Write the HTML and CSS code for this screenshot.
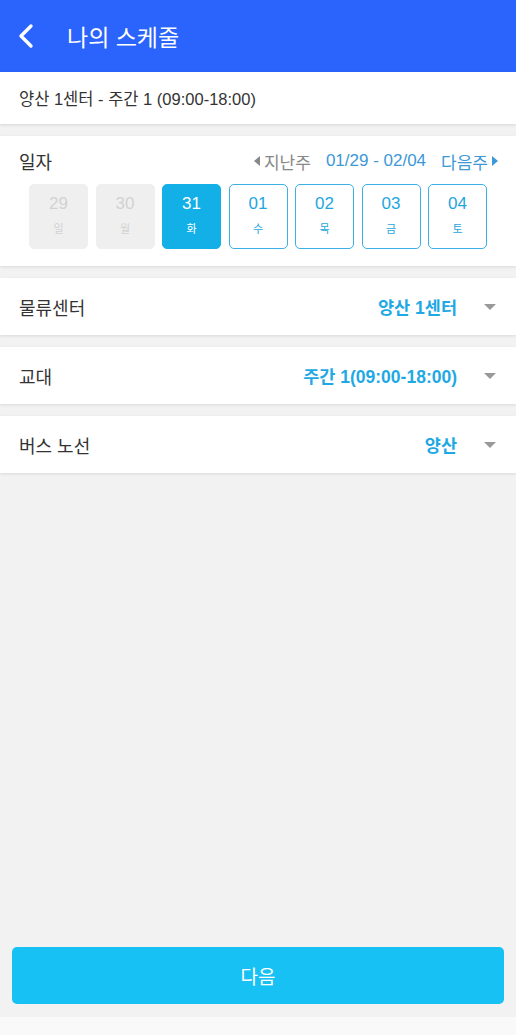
FILE: index.html
```html
<!DOCTYPE html>
<html lang="ko">
<head>
    <meta charset="UTF-8">
    <meta name="viewport" content="width=device-width, initial-scale=1.0">
    <title>나의 스케줄</title>
    <link rel="stylesheet" href="styles.css">
</head>
<body>
    <div class="page">
        <div class="header">
            <svg class="back" width="18" height="26" viewBox="0 0 18 26">
                <path d="M14 3 L4 13 L14 23" fill="none" stroke="#fff" stroke-width="3.4" stroke-linecap="round" stroke-linejoin="round"/>
            </svg>
            <h1 class="title">나의 스케줄</h1>
        </div>

        <div class="info">양산 1센터 - 주간 1 (09:00-18:00)</div>

        <div class="card date-card">
            <div class="date-top">
                <span class="label">일자</span>
                <div class="week-nav">
                    <span class="prev"><i class="tri-left"></i>지난주</span>
                    <span class="range">01/29 - 02/04</span>
                    <span class="next">다음주<i class="tri-right"></i></span>
                </div>
            </div>
            <ul class="days">
                <li class="day off"><b>29</b><small>일</small></li>
                <li class="day off"><b>30</b><small>월</small></li>
                <li class="day current"><b>31</b><small>화</small></li>
                <li class="day"><b>01</b><small>수</small></li>
                <li class="day"><b>02</b><small>목</small></li>
                <li class="day"><b>03</b><small>금</small></li>
                <li class="day"><b>04</b><small>토</small></li>
            </ul>
        </div>

        <div class="card row">
            <span class="label">물류센터</span>
            <span class="value">양산 1센터</span>
            <i class="caret"></i>
        </div>
        <div class="card row">
            <span class="label">교대</span>
            <span class="value">주간 1(09:00-18:00)</span>
            <i class="caret"></i>
        </div>
        <div class="card row">
            <span class="label">버스 노선</span>
            <span class="value">양산</span>
            <i class="caret"></i>
        </div>

        <div class="spacer"></div>

        <div class="footer">
            <button class="next-btn">다음</button>
        </div>
        <div class="bottom"></div>
    </div>
</body>
</html>
```

FILE: styles.css
```css
*{
    margin: 0;
    padding: 0;
    list-style: none;
    box-sizing: border-box;
}
body{
    font-family: "Liberation Sans", "Noto Sans CJK KR", sans-serif;
    background-color: #f2f2f2;
    color: #333;
}
.page{
    width: 516px;
    height: 1035px;
    display: flex;
    flex-direction: column;
}
.header{
    height: 72px;
    background-color: #2a64fc;
    display: flex;
    align-items: center;
    padding-left: 17px;
}
.back{
    margin-right: 32px;
}
.title{
    color: #fff;
    font-size: 23px;
    font-weight: 400;
}
.info{
    height: 52px;
    background-color: #fff;
    display: flex;
    align-items: center;
    padding-left: 19px;
    font-size: 16.5px;
    color: #333;
    box-shadow: 0 1px 3px rgba(0,0,0,0.12);
}
.card{
    background-color: #fff;
    margin-top: 12px;
    box-shadow: 0 1px 3px rgba(0,0,0,0.1);
}
.label{
    font-size: 18px;
    color: #333;
}
.date-card{
    height: 130px;
    padding: 12px 0 0 0;
}
.date-top{
    display: flex;
    justify-content: space-between;
    align-items: center;
    padding: 0 18px 0 19px;
    height: 26px;
}
.week-nav{
    display: flex;
    align-items: center;
    font-size: 17px;
}
.prev{
    color: #888;
    display: flex;
    align-items: center;
}
.range{
    color: #3d98d6;
    margin-left: 15px;
    margin-right: 15px;
}
.next{
    color: #3d98d6;
    display: flex;
    align-items: center;
}
.tri-left{
    width: 0;
    height: 0;
    border-top: 5px solid transparent;
    border-bottom: 5px solid transparent;
    border-right: 6px solid #888;
    margin-right: 4px;
}
.tri-right{
    width: 0;
    height: 0;
    border-top: 5px solid transparent;
    border-bottom: 5px solid transparent;
    border-left: 6px solid #3d98d6;
    margin-left: 4px;
}
.days{
    display: flex;
    gap: 7.5px;
    padding-left: 29px;
    margin-top: 10px;
}
.day{
    width: 59px;
    height: 65px;
    border: 1.5px solid #3ab0e5;
    border-radius: 5px;
    display: flex;
    flex-direction: column;
    align-items: center;
    padding-top: 8px;
    color: #1ea6e0;
}
.day b{
    font-weight: 400;
    font-size: 17px;
    line-height: 22px;
}
.day small{
    font-size: 11px;
    margin-top: 5px;
}
.day.off{
    background-color: #efefef;
    border-color: #efefef;
    color: #d2d2d2;
}
.day.current{
    background-color: #13afe7;
    border-color: #13afe7;
    color: #fff;
}
.row{
    height: 57px;
    display: flex;
    align-items: center;
    padding: 0 20px 0 19px;
}
.row .label{
    flex: 1;
}
.value{
    color: #1fa9e4;
    font-weight: 700;
    font-size: 17.5px;
}
.caret{
    width: 0;
    height: 0;
    border-left: 6px solid transparent;
    border-right: 6px solid transparent;
    border-top: 6px solid #999;
    margin-left: 27px;
}
.spacer{
    flex: 1;
}
.footer{
    padding: 0 12px 13px 12px;
}
.next-btn{
    width: 100%;
    height: 57px;
    border: none;
    border-radius: 5px;
    background-color: #17c1f3;
    color: #fff;
    font-family: inherit;
    font-size: 19px;
}
.bottom{
    height: 18px;
    background-color: #f9f9f9;
}
```
